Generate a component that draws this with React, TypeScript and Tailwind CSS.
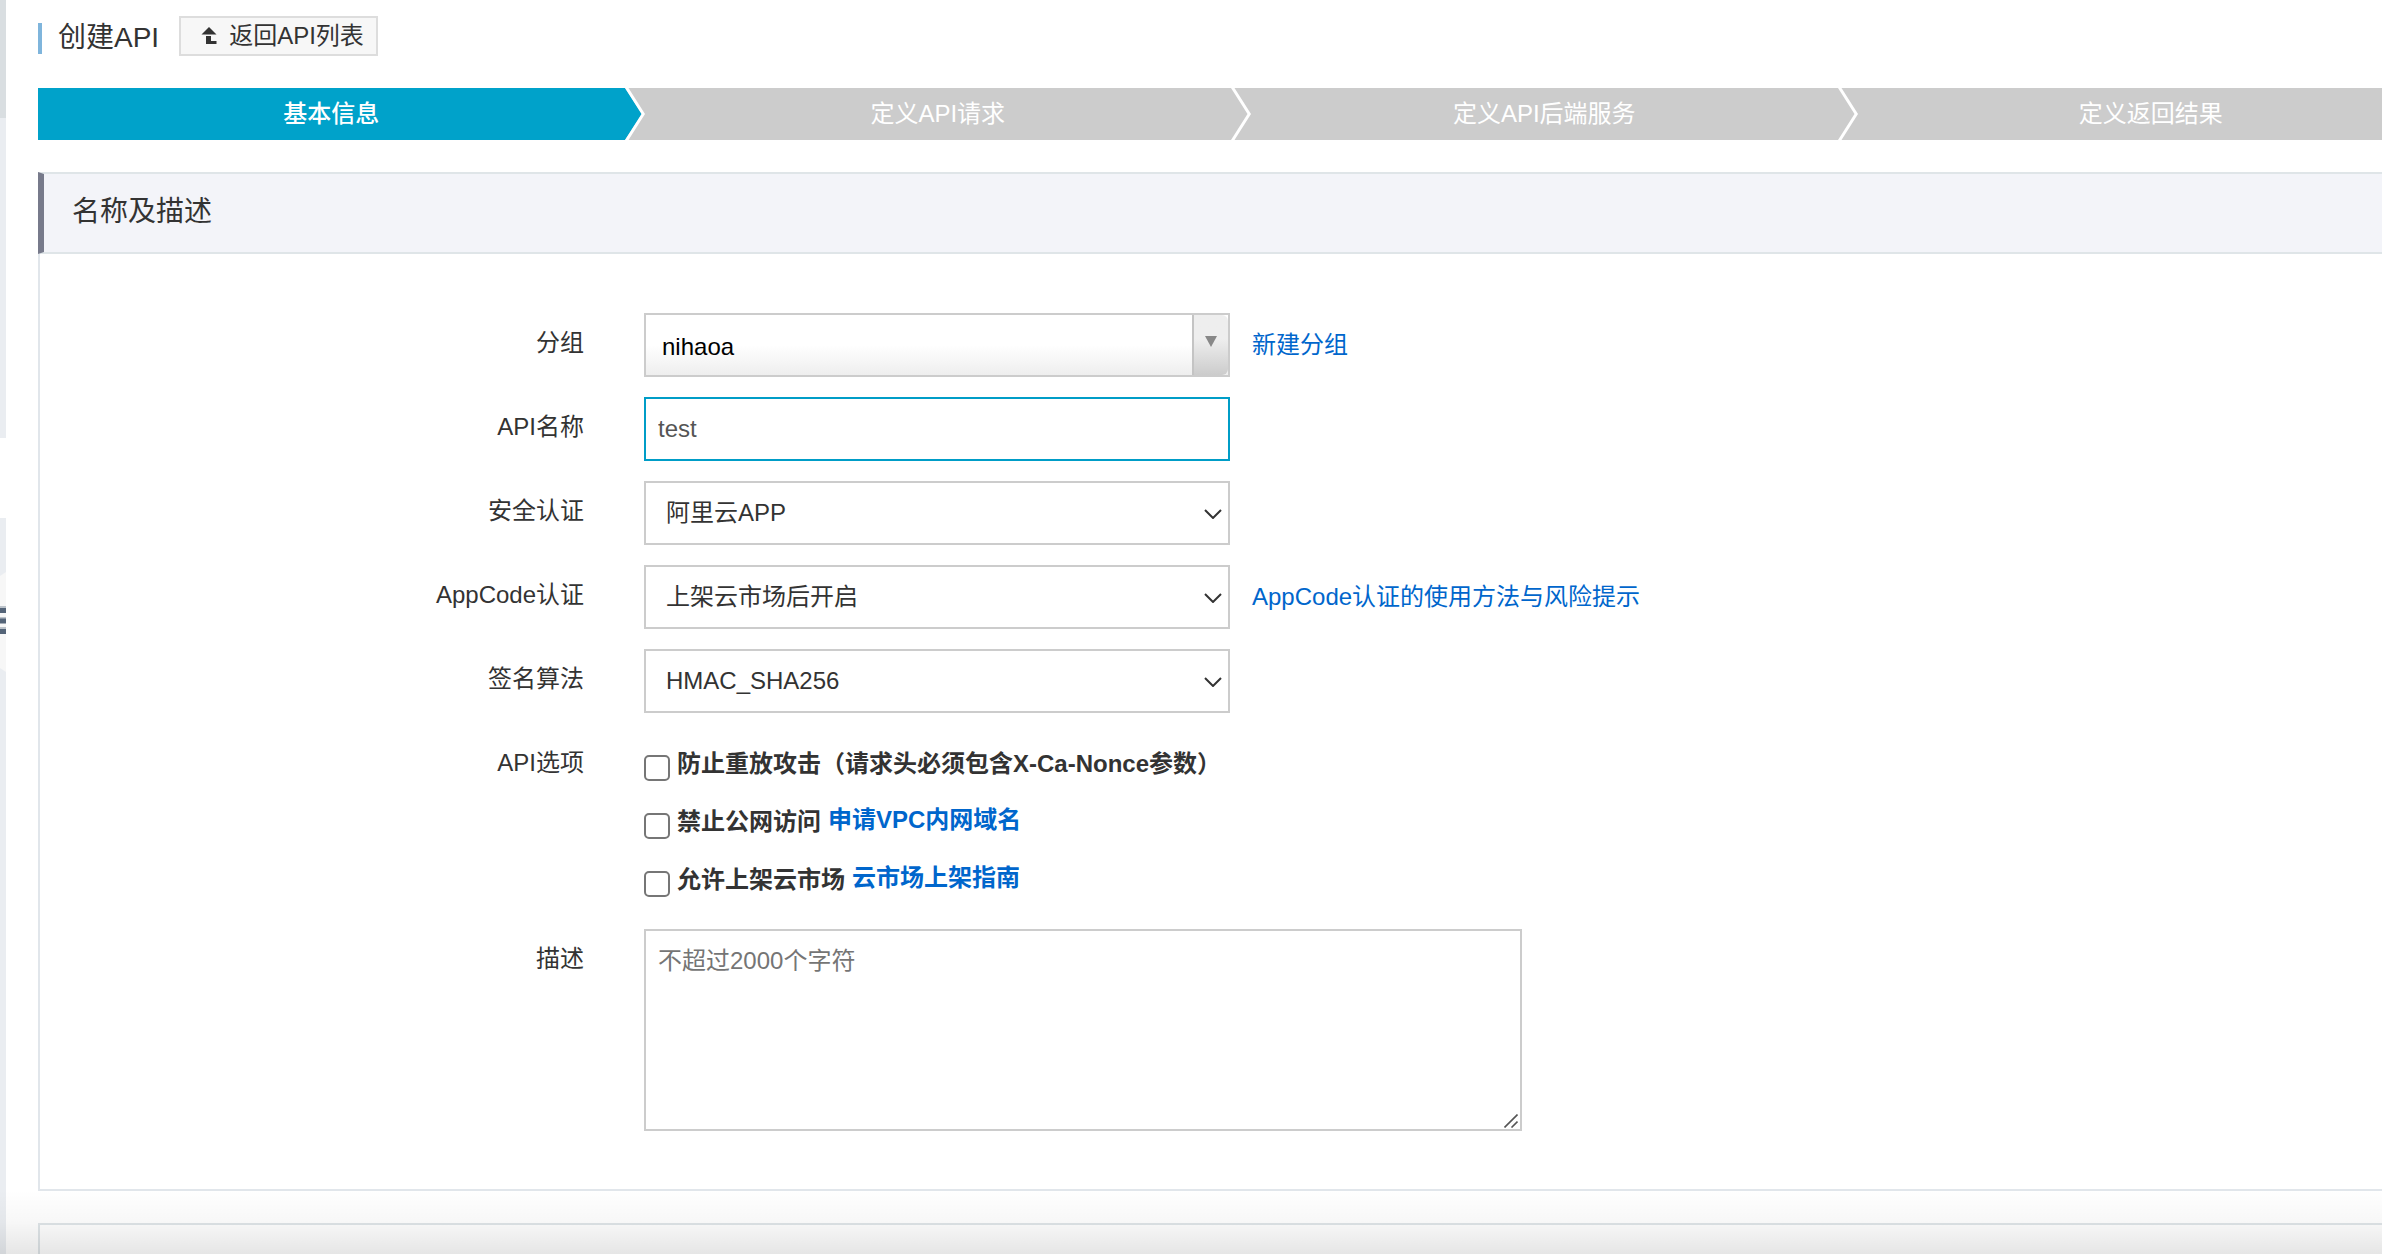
import { useState } from "react"

const steps = ["基本信息", "定义API请求", "定义API后端服务", "定义返回结果"]

const fieldClass =
    "block h-16 w-full appearance-none rounded-none border-2 border-[#ccc] bg-white text-2xl text-[#333] outline-none"

const StepBar = ({ current }: { current: number }) => (
    <ol className="-mr-[82px] flex h-[52px] bg-[#ccc]">
        {steps.map((step, i) => (
            <li
                key={step}
                className={`flex min-w-0 flex-1 text-2xl text-white ${i === current ? "font-medium" : ""}`}
            >
                <span
                    className={`flex flex-1 items-center justify-center ${i === current ? "bg-[#00a2ca]" : "bg-[#ccc]"}`}
                >
                    {step}
                </span>
                <svg className="h-[52px] w-5 shrink-0" viewBox="0 0 20 52" aria-hidden="true">
                    <path d="M0 0 L17 26 L0 52 Z" fill={i === current ? "#00a2ca" : "#ccc"} />
                    <path d="M0 0 H3.5 L20 26 L3.5 52 H0 L16.5 26 Z" fill="#fff" />
                </svg>
            </li>
        ))}
    </ol>
)

const Row = ({ label, htmlFor, children }: any) => (
    <div className="flex items-start gap-[60px]">
        <label htmlFor={htmlFor} className="h-[60px] w-[544px] shrink-0 text-right text-2xl leading-[60px] text-[#333]">
            {label}
        </label>
        {children}
    </div>
)

const SelectField = ({ id, options }: { id: string; options: string[] }) => (
    <div className="relative w-[586px]">
        <select id={id} className={`${fieldClass} pl-5 pr-10`}>
            {options.map((option) => (
                <option key={option}>{option}</option>
            ))}
        </select>
        <svg
            className="pointer-events-none absolute right-2 top-7 h-[10px] w-[18px]"
            viewBox="0 0 18 10"
            fill="none"
            stroke="#333"
            strokeWidth="2"
            aria-hidden="true"
        >
            <path d="M1 1 L9 9 L17 1" />
        </svg>
    </div>
)

const CheckOption = ({ id, label, link }: { id: string; label: string; link?: string }) => (
    <div className="flex h-[38px] items-center text-2xl font-bold">
        <input
            id={id}
            type="checkbox"
            className="mt-2 size-[26px] appearance-none rounded-[5px] border-2 border-[#767676] bg-white checked:bg-[#00a2ca]"
        />
        <label htmlFor={id} className="ml-[7px] text-[#333]">
            {label}
        </label>
        {link && (
            <a href="#" className="mb-1 ml-[7px] text-[#06c]">
                {link}
            </a>
        )}
    </div>
)

// collapsed side menu, only its right edge is visible
const SideRail = () => (
    <aside className="flex w-[6px] shrink-0 flex-col">
        <div className="h-[118px] bg-[#d9dee1]" />
        <div className="h-[320px] bg-[#eaedf1]" />
        <div className="h-20 bg-white" />
        <div className="flex-1 bg-[#eaedf1] pt-[54px]">
            <svg className="h-[100px] w-[6px]" viewBox="0 0 6 100" aria-hidden="true">
                <path d="M0 4 L6 0 V100 L0 96 Z" fill="#f7f7f7" />
                <path d="M0 35 H6 M0 46 H6 M0 56 H6" stroke="#bcc3ca" strokeWidth="2" />
                <path d="M0 38.5 H6 M0 49 H6 M0 59.5 H6" stroke="#546478" strokeWidth="5" />
            </svg>
        </div>
    </aside>
)

export default function App() {
    const [name, setName] = useState("test")

    return (
        <div className="relative flex min-h-screen overflow-hidden bg-white font-['Liberation_Sans','Noto_Sans_CJK_SC',sans-serif] text-[#333]">
            <SideRail />
            <main className="flex min-w-0 flex-1 flex-col pl-8">
                <header className="flex items-start pt-4">
                    <div className="mt-[7px] h-[31px] w-1 bg-[#7fb5dc]" />
                    <h1 className="ml-4 text-[28px] leading-[44px]">创建API</h1>
                    <button className="ml-5 flex h-10 items-center gap-3 border-2 border-[#ddd] bg-[#f7f7f7] pl-5 pr-3 text-2xl">
                        <svg className="h-[18px] w-4" viewBox="0 0 16 18" fill="#333" aria-hidden="true">
                            <path d="M8 0 L15.5 7.5 H0.5 Z" />
                            <path d="M5 9 H10 V14 H15.5 V17 H5 Z" />
                        </svg>
                        返回API列表
                    </button>
                </header>

                <nav className="mt-7">
                    <StepBar current={0} />
                </nav>

                <section className="mt-8">
                    <h2 className="h-[82px] border-y-2 border-l-[6px] border-y-[#dfe5e8] border-l-[#777a8b] bg-[#f3f4f9] pl-7 text-[28px] leading-[76px]">
                        名称及描述
                    </h2>
                    <form
                        className="flex flex-col gap-5 border-b-2 border-l-2 border-[#e1e6eb] pb-[58px] pt-[59px]"
                        onSubmit={(e) => e.preventDefault()}
                    >
                        <Row label="分组" htmlFor="group">
                            <div className="flex gap-[22px]">
                                <div className="relative w-[586px]">
                                    <select
                                        id="group"
                                        className="block h-16 w-full appearance-none border-2 border-[#ccc] bg-linear-to-b from-white from-50% to-[#eee] pl-4 pr-10 pt-1 text-2xl text-black outline-none"
                                    >
                                        <option>nihaoa</option>
                                    </select>
                                    <span className="pointer-events-none absolute right-[2px] top-[2px] flex h-[60px] w-9 justify-center rounded-r-md border-l-2 border-[#c4c4c4] bg-linear-to-b from-[#eee] from-40% to-[#ccc] pt-[21px]">
                                        <svg className="h-[11px] w-3" viewBox="0 0 12 11" fill="#888" aria-hidden="true">
                                            <path d="M0 0 H12 L6 11 Z" />
                                        </svg>
                                    </span>
                                </div>
                                <a href="#" className="text-2xl leading-16 text-[#06c]">
                                    新建分组
                                </a>
                            </div>
                        </Row>
                        <Row label="API名称" htmlFor="name">
                            <div className="w-[586px]">
                                <input
                                    id="name"
                                    value={name}
                                    onChange={(e) => setName(e.target.value)}
                                    className="block h-16 w-full border-2 border-[#009dc7] bg-white px-3 text-2xl text-[#555] outline-none"
                                />
                            </div>
                        </Row>
                        <Row label="安全认证" htmlFor="auth">
                            <SelectField id="auth" options={["阿里云APP"]} />
                        </Row>
                        <Row label="AppCode认证" htmlFor="appcode">
                            <div className="flex gap-[22px]">
                                <SelectField id="appcode" options={["上架云市场后开启"]} />
                                <a href="#" className="text-2xl leading-16 text-[#06c]">
                                    AppCode认证的使用方法与风险提示
                                </a>
                            </div>
                        </Row>
                        <Row label="签名算法" htmlFor="sign">
                            <SelectField id="sign" options={["HMAC_SHA256"]} />
                        </Row>
                        <Row label="API选项" htmlFor="nonce">
                            <div className="flex flex-col gap-5 pb-[10px] pt-3">
                                <CheckOption id="nonce" label="防止重放攻击（请求头必须包含X-Ca-Nonce参数）" />
                                <CheckOption id="intranet" label="禁止公网访问" link="申请VPC内网域名" />
                                <CheckOption id="market" label="允许上架云市场" link="云市场上架指南" />
                            </div>
                        </Row>
                        <Row label="描述" htmlFor="desc">
                            <div className="relative w-[878px]">
                                <textarea
                                    id="desc"
                                    placeholder="不超过2000个字符"
                                    className="block h-[202px] w-full resize-none border-2 border-[#ccc] bg-white p-3 text-2xl leading-9 outline-none placeholder:text-[#757575]"
                                />
                                <svg
                                    className="pointer-events-none absolute bottom-[3px] right-1 size-[14px]"
                                    viewBox="0 0 14 14"
                                    stroke="#555"
                                    strokeWidth="1.6"
                                    aria-hidden="true"
                                >
                                    <path d="M0.5 13.5 L13.5 0.5 M7.5 13.5 L13.5 7.5" />
                                </svg>
                            </div>
                        </Row>
                    </form>
                </section>

                <section className="mt-8 flex-1 border-l-2 border-t-2 border-[#dfe5e8]" />
            </main>
            <div className="pointer-events-none absolute inset-x-0 bottom-0 h-16 bg-linear-to-b from-transparent via-black/3 to-black/10" />
        </div>
    )
}
